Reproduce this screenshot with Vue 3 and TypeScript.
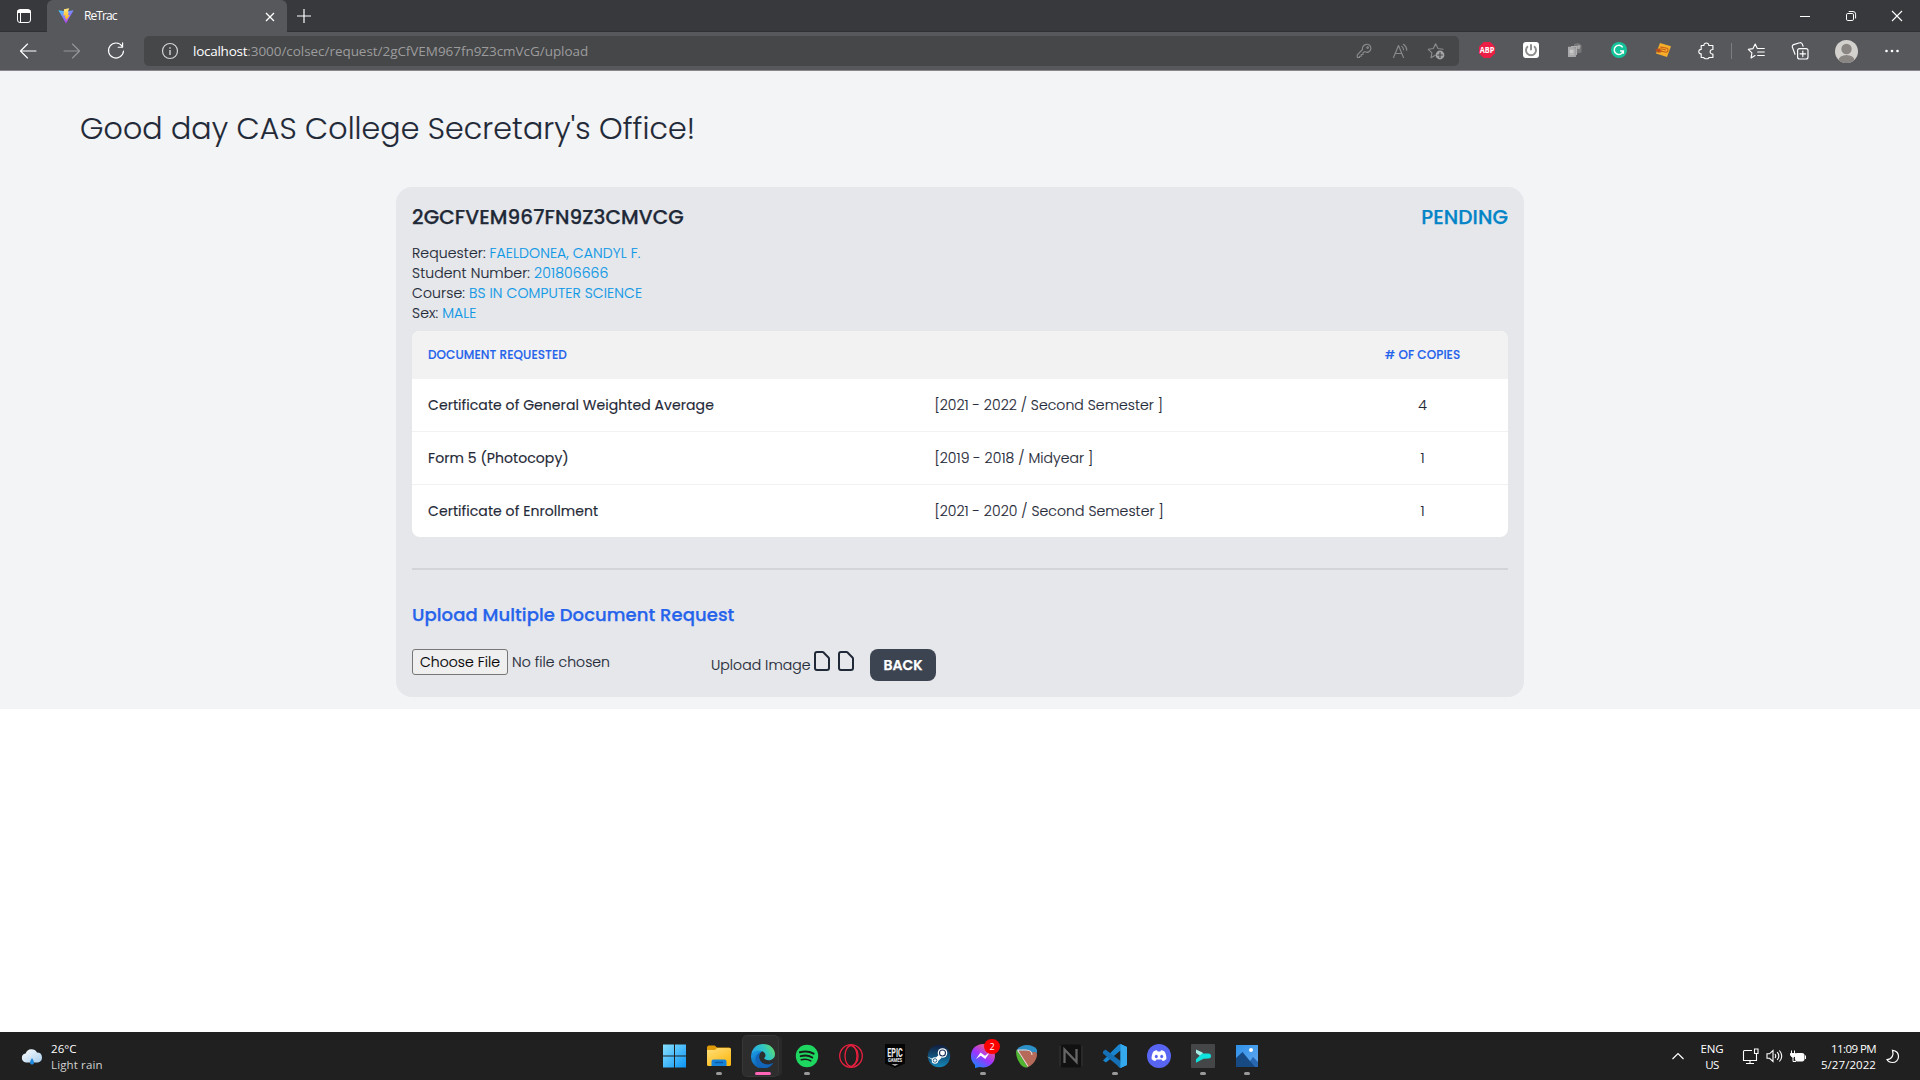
<script setup lang="ts">
import type { Directive } from 'vue'

interface Field { label: string; value: string }
interface DocumentRow { name: string; period: string; copies: number }

const fields: Field[] = [
  { label: 'Requester:', value: 'FAELDONEA, CANDYL F.' },
  { label: 'Student Number:', value: '201806666' },
  { label: 'Course:', value: 'BS IN COMPUTER SCIENCE' },
  { label: 'Sex:', value: 'MALE' },
]

const documents: DocumentRow[] = [
  { name: 'Certificate of General Weighted Average', period: '[2021 - 2022 / Second Semester ]', copies: 4 },
  { name: 'Form 5 (Photocopy)', period: '[2019 - 2018 / Midyear ]', copies: 1 },
  { name: 'Certificate of Enrollment', period: '[2021 - 2020 / Second Semester ]', copies: 1 },
]

// Tracks a single-line label out (or in) so that it spans the given width.
const vFit: Directive<HTMLElement, number> = {
  mounted(el, { value }) {
    const range = document.createRange()
    range.selectNodeContents(el)
    const natural = range.getBoundingClientRect().width
    const count = (el.textContent ?? '').trim().length
    if (count > 1) el.style.letterSpacing = `${((value - natural) / (count - 1)).toFixed(3)}px`
  },
}
</script>

<template>
  <div class="screen">
    <header class="browser">
      <div class="tabstrip">
        <div class="tab-actions">
          <svg width="16" height="16" viewBox="0 0 16 16" fill="none" stroke="#fff"><rect x="1.5" y="1.5" width="13" height="13" rx="2.5" /><path d="M1.5 3.5h13" stroke-width="3" /><path d="M4.5 5v9.5" /></svg>
        </div>
        <div class="tab">
          <svg width="16" height="16" viewBox="0 0 16 16">
            <defs>
              <linearGradient id="vite" x1="0" y1="0" x2=".6" y2="1"><stop offset="0" stop-color="#41d1ff" /><stop offset="1" stop-color="#bd34fe" /></linearGradient>
              <linearGradient id="bolt" x1="0" y1="0" x2="0" y2="1"><stop offset="0" stop-color="#ffea83" /><stop offset="1" stop-color="#ffa800" /></linearGradient>
            </defs>
            <path d="M.4 2.2 8 15.5 15.6 2.2 8 3.6z" fill="url(#vite)" />
            <path d="M11.2.3 6 1.3l-.5 6.1 2 .1-.7 3 1.7-.5-.8 3.4 4-6.5-1.8.2.9-2.8h-1.1z" fill="url(#bolt)" />
          </svg>
          <span v-fit="33.5" class="tab-title">ReTrac</span>
          <svg class="tab-close" width="10" height="10" viewBox="0 0 10 10" stroke="#fff" stroke-width="1.3"><path d="m1 1 8 8M9 1 1 9" /></svg>
        </div>
        <svg class="new-tab" width="16" height="16" viewBox="0 0 16 16" stroke="#fff" stroke-width="1.2"><path d="M8 1v14M1 8h14" /></svg>
        <div class="window-controls">
          <svg width="12" height="12" viewBox="0 0 12 12" stroke="#fff" fill="none"><path d="M1 6.5h10" /></svg>
          <svg width="12" height="12" viewBox="0 0 12 12" stroke="#fff" fill="none"><rect x="1.5" y="3.5" width="7" height="7" rx="1.3" /><path d="M3.7 1.5H8a2.6 2.6 0 0 1 2.6 2.6v4.4" /></svg>
          <svg width="12" height="12" viewBox="0 0 12 12" stroke="#fff" fill="none" stroke-width="1.1"><path d="m1 1 10 10M11 1 1 11" /></svg>
        </div>
      </div>

      <div class="toolbar">
        <span class="tool"><svg width="18" height="18" viewBox="0 0 18 18" class="line"><path d="M17 9H1.600M8.500 2 1.500 9l7 7" /></svg></span>
        <span class="tool dim"><svg width="18" height="18" viewBox="0 0 18 18" class="line"><path d="M1 9h15.400M9.500 2l7 7-7 7" /></svg></span>
        <span class="tool"><svg width="18" height="18" viewBox="0 0 18 18" class="line"><path d="M15.200 4.300A7.500 7.500 0 1 0 16.500 9M15.600.8v4.400h-4.400" /></svg></span>
        <div class="address">
          <svg class="info" width="18" height="18" viewBox="0 0 18 18" fill="none" stroke="#d5d5d6" stroke-width="1.2"><circle cx="9" cy="9" r="7.5" /><path d="M9 8v5M9 5.200v1.500" stroke-width="1.4" /></svg>
          <span class="url"><b v-fit="54.5">localhost</b><span v-fit="341">:3000/colsec/request/2gCfVEM967fn9Z3cmVcG/upload</span></span>
          <span class="address-tool"><svg width="16" height="16" viewBox="0 0 16 16" class="line"><path d="M9.300 1.600a4 4 0 1 1-.6 7L7 9.800v1.700H5.200v1.700H3.500v1.300H1.300v-2.700l5.200-5.300A4.600 4.600 0 0 1 9.300 1.600z" /><circle cx="11.6" cy="4.5" r=".8" /></svg></span>
          <span class="address-tool"><svg width="17" height="16" viewBox="0 0 17 16" class="line"><path d="m1.500 14.500 5-12 5 12M3.200 10.500h6.600M9.800 3.400a4 4 0 0 1 1.700 3.400M11.400 1.300a7.500 7.500 0 0 1 3.400 6" /></svg></span>
          <span class="address-tool"><svg width="18" height="18" viewBox="0 0 18 18" class="line"><path d="M8.300 13.300 4 15.800l.9-4.900L1.300 7.300l5-.8 2.300-4.700L11 6.500l5 .8" /><circle cx="13" cy="13" r="4.4" fill="#a4a4a5" stroke="none" /><path d="M13 10.600v4.800M10.600 13h4.800" stroke="#464749" /></svg></span>
        </div>
        <div class="extensions">
          <span class="tool"><svg width="16" height="16" viewBox="0 0 16 16"><path d="M4.700 0h6.600L16 4.700v6.600L11.300 16H4.700L0 11.300V4.700z" fill="#ed1e45" /><text x="8" y="11" text-anchor="middle" font-size="8.4" font-weight="700" fill="#fff" textLength="14.6" lengthAdjust="spacingAndGlyphs" font-family="Open Sans, sans-serif">ABP</text></svg></span>
          <span class="tool"><svg width="16" height="16" viewBox="0 0 16 16" fill="none"><rect width="16" height="16" rx="3" fill="#fff" /><path d="M4.900 4.300a5 5 0 1 0 6.200 0M8 2.300v6" stroke="#8e8e8e" stroke-width="2" /></svg></span>
          <span class="tool"><svg width="16" height="16" viewBox="0 0 16 16"><path d="M7 2 11 1l3.500 2v7.500L7 12z" fill="#777779" /><path d="M4 4h6v9H4z" fill="#b0b0b1" /><path d="M1.500 5h7.500v10H1.500z" fill="#96969a" /><path d="M1 4.700h5l2.500 2.400v8H1z" fill="#a9a9ab" /><path d="M3 8h3.200v3H3zM3 12.300h4" fill="#c9c9ca" stroke="#c9c9ca" stroke-width=".6" /><path d="m10 4 2-1 1.500 1-1 3h-2z" fill="#a9a9ab" /></svg></span>
          <span class="tool"><svg width="16" height="16" viewBox="0 0 16 16" fill="none"><circle cx="8" cy="8" r="8" fill="#15c39a" /><path d="M11.700 5.400A4.600 4.600 0 1 0 12.300 9H9.100M12.300 9v2.700" stroke="#fff" stroke-width="1.5" /></svg></span>
          <span class="tool"><svg width="18" height="16" viewBox="0 0 18 16" fill="none"><path d="m6 1 11 3.300-4 10.700-11-3.400z" fill="#f4ae2a" /><path d="m1 7.500 4.500-1.200L8 10l-4 .7z" fill="#b84f1c" /><path d="m7 5 6 1.300c2 .8 1 3.800-1 4L7 9zm1 2 4 1" stroke="#c85f19" stroke-width="1.1" /></svg></span>
          <span class="tool"><svg width="18" height="18" viewBox="0 0 18 18" class="line"><path d="M3.200 3.500h2.700C5.700.2 11 .2 10.800 3.500h4.100v4c-3.700-.2-3.700 4.800 0 4.600v3.400h-4c.2 1.700-5.100 1.700-5 0H3.200v-3.700C0 12.300 0 7 3.200 7.400z" /></svg></span>
        </div>
        <i class="separator"></i>
        <span class="tool"><svg width="18" height="18" viewBox="0 0 18 18" class="line"><path d="m8 13.600-3.900 2.300.8-5L1.300 7.400l4.700-.8L8.200 2l2 4.200M10.700 6.500h6.600M10.700 10h6.600M10.700 13.500h6.600" /></svg></span>
        <span class="tool"><svg width="18" height="18" viewBox="0 0 18 18" class="line"><rect x="6.6" y="6.6" width="10.4" height="10.4" rx="2" /><path d="M11.800 9v5.600M9 11.800h5.600M4 12.300 1.400 5.200a2 2 0 0 1 1.200-2.600L8.700.8a2 2 0 0 1 2.600 1.300l.8 2.100" /></svg></span>
        <span class="tool avatar"><svg width="23" height="23" viewBox="0 0 23 23"><clipPath id="face"><circle cx="11.5" cy="11.5" r="11.5" /></clipPath><g clip-path="url(#face)"><rect width="23" height="23" fill="#d3d1ce" /><circle cx="11.5" cy="9" r="5.2" fill="#8a8683" /><ellipse cx="11.5" cy="20.5" rx="8" ry="5.5" fill="#8a8683" /></g></svg></span>
        <span class="tool"><svg width="16" height="4" viewBox="0 0 16 4" fill="#fff"><circle cx="2.5" cy="2" r="1.3" /><circle cx="8" cy="2" r="1.3" /><circle cx="13.5" cy="2" r="1.3" /></svg></span>
      </div>
    </header>

    <main class="page">
      <h1>Good day CAS College Secretary's Office!</h1>
      <section class="card">
        <div class="card-head">
          <h2>2GCFVEM967FN9Z3CMVCG</h2>
          <strong>PENDING</strong>
        </div>
        <ul class="fields">
          <li v-for="f in fields" :key="f.label">{{ f.label }} <em>{{ f.value }}</em></li>
        </ul>
        <div class="table">
          <div class="row head">
            <span class="name">DOCUMENT REQUESTED</span>
            <span class="copies"># OF COPIES</span>
          </div>
          <div v-for="d in documents" :key="d.name" class="row">
            <span class="name">{{ d.name }}</span>
            <span class="period">{{ d.period }}</span>
            <span class="copies">{{ d.copies }}</span>
          </div>
        </div>
        <hr />
        <h3>Upload Multiple Document Request</h3>
        <div class="upload">
          <button class="choose" type="button">Choose File</button>
          <span class="chosen">No file chosen</span>
          <span class="upload-label">Upload Image</span>
          <svg v-for="n in 2" :key="n" width="24" height="24" viewBox="0 0 24 24" fill="none" stroke="#1f2937" stroke-width="2"><path d="M7 21h10a2 2 0 0 0 2-2V9.400a1 1 0 0 0-.3-.7l-5.400-5.400a1 1 0 0 0-.7-.3H7a2 2 0 0 0-2 2v14a2 2 0 0 0 2 2z" /></svg>
          <button class="back" type="button">BACK</button>
        </div>
      </section>
    </main>

    <footer class="taskbar">
      <div class="weather">
        <svg width="22" height="17" viewBox="0 0 22 17"><defs><linearGradient id="cloud" x1="0" y1="0" x2="1" y2="1"><stop offset="0" stop-color="#fff" /><stop offset="1" stop-color="#a7cdec" /></linearGradient></defs><path d="M5 14.500A4.600 4.600 0 0 1 4.600 5.400 6.300 6.300 0 0 1 16 4.600a5 5 0 0 1 1 9.900z" fill="url(#cloud)" /><path d="M11 10c3 4 2.300 6.500 0 6.500S8 14 11 10z" fill="#2088dd" /></svg>
        <div class="stack left"><span v-fit="25.5">26°C</span><span v-fit="51.5" class="muted">Light rain</span></div>
      </div>
      <nav class="apps">
        <span class="app"><svg width="24" height="24" viewBox="0 0 24 24"><defs><linearGradient id="win" x1="0" y1="0" x2="1" y2="1"><stop offset="0" stop-color="#87e0ff" /><stop offset="1" stop-color="#0a94f5" /></linearGradient></defs><path d="M0 .5h11v11H0zM12 .5h11v11H12zM0 12.500h11v11H0zM12 12.500h11v11H12z" fill="url(#win)" /></svg></span>
        <span class="app open"><svg width="24" height="24" viewBox="0 0 24 24"><defs><linearGradient id="folder" x1="0" y1="0" x2=".7" y2="1"><stop offset="0" stop-color="#ffe07c" /><stop offset="1" stop-color="#fdb813" /></linearGradient></defs><path d="M0 3.200A2 2 0 0 1 2 1.400h5.600l2.500 2H22a2 2 0 0 1 2 2v4H0z" fill="#e09b08" /><path d="M0 6h8l2-2h12.500A1.500 1.500 0 0 1 24 5.500v15a1.500 1.500 0 0 1-1.500 1.500h-21A1.500 1.500 0 0 1 0 20.500z" fill="url(#folder)" /><path d="M4.500 22v-4.500a2 2 0 0 1 2-2h11a2 2 0 0 1 2 2V22z" fill="#1683d9" /><path d="M8.500 18.500h7" stroke="#0b5ba8" stroke-width="1.5" stroke-linecap="round" /></svg></span>
        <span class="app open active">
          <svg width="24" height="24" viewBox="0 0 24 24"><defs><linearGradient id="edge1" x1="0" y1=".4" x2="1" y2="0"><stop offset="0" stop-color="#2aa7e8" /><stop offset=".5" stop-color="#2fc6c2" /><stop offset="1" stop-color="#70e455" /></linearGradient><linearGradient id="edge2" x1="0" y1="0" x2=".6" y2="1"><stop offset="0" stop-color="#1ba0e8" /><stop offset="1" stop-color="#0b53a5" /></linearGradient></defs><path d="M.4 10C1.300 4 6 0 12 0c7.500 0 12 5 12 10.200 0 3.600-2.800 6-6.200 6-2.600 0-4.600-.9-4.600-1.900 0-.7 1.300-1 1.300-3.100C14.500 8 10 4 .4 10z" fill="url(#edge1)" /><path d="M.2 10.500C2.500 6 8 5.500 11.500 7.500c-3 1-4 3.500-3.600 6 .6 4.200 4.500 7.500 9 7 2-.2 3.600-1 4.600-1.500.5-.3.8.1.5.5A12 12 0 0 1 0 12.500z" fill="url(#edge2)" /><path d="M9 8.500c-2.500 1-5 4-4.500 7.500.6 4 4 7.400 8.500 7.900 3 .2 7-1.400 9-4.300-5 2.500-14 .5-13.800-6.500.1-2 .8-3.500.8-4.600z" fill="#1265b8" /></svg>
        </span>
        <span class="app open"><svg width="24" height="24" viewBox="0 0 24 24" fill="none" stroke="#191b19" stroke-linecap="round"><circle cx="12" cy="12" r="11.2" fill="#1ed760" stroke="none" /><path d="M5 8.300c4.500-1.300 9.500-.9 13.600 1.300" stroke-width="2.2" /><path d="M5.700 12.200c4-1.100 8.200-.7 11.600 1.300" stroke-width="1.9" /><path d="M6.300 15.800c3.300-.9 6.700-.5 9.500 1.100" stroke-width="1.6" /></svg></span>
        <span class="app"><svg width="24" height="24" viewBox="0 0 24 24" fill="none" stroke="#e8203f" stroke-width="1.3"><circle cx="12" cy="12" r="11.3" /><ellipse cx="12" cy="12" rx="6" ry="10.5" /><path d="M13.500 2.500c4 1.500 5.500 5.500 5.500 9.500s-1.500 8-5.500 9.500" /></svg></span>
        <span class="app"><svg class="epic" width="24" height="24" viewBox="0 0 24 24"><path d="M2 0h20v19.500L12 24 2 19.500z" fill="#050505" /><g fill="#eee" font-family="Roboto, sans-serif" font-weight="700" text-anchor="middle"><text x="12" y="12.500" font-size="12.5" textLength="15.5" lengthAdjust="spacingAndGlyphs">EPIC</text><text x="12" y="17.500" font-size="4.5" textLength="14" lengthAdjust="spacingAndGlyphs">GAMES</text></g><path d="M8.500 20.200 12 21.800l3.500-1.600z" fill="#ddd" /></svg></span>
        <span class="app"><svg width="24" height="24" viewBox="0 0 24 24"><defs><linearGradient id="steam" x1="0" y1="0" x2="0" y2="1"><stop offset="0" stop-color="#111d3d" /><stop offset="1" stop-color="#1387b8" /></linearGradient></defs><circle cx="12" cy="12" r="11.2" fill="url(#steam)" /><path d="m0 12.500 7 3 4.500-4.500 3 3-5 4.500" fill="#fff" /><circle cx="8" cy="16.500" r="3.200" fill="#fff" /><circle cx="15.500" cy="9" r="4.800" fill="#fff" /><circle cx="15.500" cy="9" r="3" fill="none" stroke="#1b315a" stroke-width="1.1" /><circle cx="8" cy="16.500" r="1.800" fill="none" stroke="#1b5a86" stroke-width=".9" /></svg></span>
        <span class="app open"><svg width="24" height="24" viewBox="0 0 24 24"><defs><linearGradient id="msg" x1=".1" y1="1" x2=".8" y2="0"><stop offset="0" stop-color="#0a8cff" /><stop offset=".5" stop-color="#a033ff" /><stop offset="1" stop-color="#ff6a68" /></linearGradient></defs><path d="M12 0c6.800 0 12 5 12 11.700s-5.200 11.700-12 11.700c-1.200 0-2.400-.2-3.500-.5L4 24v-3A11.500 11.500 0 0 1 0 11.700C0 5 5.200 0 12 0z" fill="url(#msg)" /><path d="m5 15 4.500-6.500 4.500 3.200 5-3.700-4.700 7-4.500-3.300z" fill="#fff" /></svg><b class="badge">2</b></span>
        <span class="app"><svg width="24" height="24" viewBox="0 0 24 24" fill="none"><path d="M2 5.500C6-.5 18-.5 22 5.500V9H2z" fill="#2c91c9" /><path d="M1.500 5.500 13 23.500c-5 .5-7-2-9.500-6.500C1.500 13.500.5 9 1.500 5.500z" fill="#50b531" /><path d="M3 6.500h9c2 0 4 .5 5.500 2 2-1 4.500-.5 4.500 2 0 4-3 10-9 12.500z" fill="#b66a5a" /><path d="M2.500 6h8.500c3.500 0 6 2 6 5M2.800 6.500 13 22.500" stroke="#f0ddd7" stroke-width="1.1" /></svg></span>
        <span class="app"><svg width="24" height="24" viewBox="0 0 24 24" fill="none"><path d="M0 2h24v20H0z" fill="#292929" /><rect x="2" y=".5" width="20" height="23" rx="1.5" fill="#111" /><path d="M5.500 19V5.500L17.500 18V5" stroke="#666" stroke-width="2.3" /></svg></span>
        <span class="app open"><svg width="24" height="24" viewBox="0 0 24 24"><path d="M17.500 0 24 3v18l-6.500 3-2.500-1.500L17.500 18V6.500L3 18.500 0 16.500 15.500.8z" fill="#1a85cf" /><path d="m0 7.500 2.500-2L17.500 17v7L0 9.500z" fill="#1670b5" /><path d="m17.500 0 6.500 3v18l-6.500 3z" fill="#35a9ed" /></svg></span>
        <span class="app"><svg width="24" height="24" viewBox="0 0 24 24"><circle cx="12" cy="12" r="12" fill="#5865f2" /><path d="M8.300 6.500 10 6.300l.6 1.200h2.800l.6-1.200 1.700.2 1.800 1c1.300 2 2 4.500 1.900 7.500-1 1.200-2.500 1.900-3.800 2.100l-1-1.500H9.400l-1 1.500c-1.400-.2-2.800-.9-3.800-2.100-.1-3 .6-5.500 1.900-7.500z" fill="#fff" /><ellipse cx="9.3" cy="12.5" rx="1.5" ry="1.7" fill="#5865f2" /><ellipse cx="14.7" cy="12.5" rx="1.5" ry="1.7" fill="#5865f2" /></svg></span>
        <span class="app open"><svg width="24" height="24" viewBox="0 0 24 24"><rect width="24" height="24" rx="1" fill="#444647" /><path d="m5 5.500 6.500 3 1.500 3.500-2.500 1L5 9z" fill="#a4eee6" /><path d="M11 9.500h6.500a2.500 2.500 0 0 1 0 5l-5 .3-7.500 4v-3.500z" fill="#10e2dd" /></svg></span>
        <span class="app open"><svg width="24" height="24" viewBox="0 0 24 24"><defs><linearGradient id="photo" x1="0" y1="0" x2="1" y2="1"><stop offset="0" stop-color="#2e91e9" /><stop offset="1" stop-color="#65a9ef" /></linearGradient></defs><path d="M1 1h22v22H1z" fill="url(#photo)" /><path d="M11 23 18 13l5 5v5z" fill="#2868b0" /><path d="M1 14 7.500 8 20 23H1z" fill="#174a83" /><circle cx="16" cy="6" r="2" fill="#fff" /></svg></span>
      </nav>
      <div class="tray">
        <svg class="chevron" width="14" height="8" viewBox="0 0 14 8" fill="none" stroke="#fff" stroke-width="1.2"><path d="m1.500 7 5.500-5.500L12.500 7" /></svg>
        <div class="stack lang"><span v-fit="23">ENG</span><span v-fit="14">US</span></div>
        <svg class="net" width="17" height="17" viewBox="0 0 17 17" fill="none" stroke="#fff" stroke-width="1.1"><path d="M10 2.500H2.500a1 1 0 0 0-1 1v9h13V8M4 15.500h8M8 12.500v3M14.500 6v4M12.500 1h3.500v4.500h-3.500z" /></svg>
        <svg class="sound" width="17" height="14" viewBox="0 0 17 14" fill="none" stroke="#fff" stroke-width="1.1"><path d="M1 4.800h2.500L7 1.500v11L3.500 9.300H1zM9 5c.9 1.200.9 2.800 0 4M11.200 3.200c2 2.300 2 5.300 0 7.600M13.400 1.500c3 3.500 3 7.500 0 11" /></svg>
        <svg class="battery" width="17" height="13" viewBox="0 0 17 13" fill="none" stroke="#fff"><rect x="5.5" y="3.5" width="8.5" height="7.5" rx="1.5" fill="#fff" /><path d="M15.500 5.500v3.500M1.500.5v3M4.500.5v3" /><path d="M.5 3.500h5v1.500l-1.500 2h-2l-1.500-2z" fill="#fff" /><path d="M3 7v4.500h3" /></svg>
        <div class="stack right"><span v-fit="45.5">11:09 PM</span><span v-fit="55">5/27/2022</span></div>
        <svg class="moon" width="14" height="15" viewBox="0 0 14 15" fill="none" stroke="#fff" stroke-width="1.2"><path d="M6.500 1.300c4 .5 6 3.200 6 6.200 0 3.500-2.700 6-6 6-2.300 0-4.500-1-5.500-3 5-.2 7-4.500 5.500-9.200z" /></svg>
      </div>
    </footer>
  </div>
</template>

<style>
html, body { margin: 0; background: #fff; overflow: hidden; }
</style>

<style scoped>
* { box-sizing: border-box; }
.screen { width: 1920px; height: 1080px; display: flex; flex-direction: column; font-family: Poppins, Inter, sans-serif; color: #1f2937; background: #fff; white-space: nowrap; }
svg { display: block; flex: none; }
h1, h2, h3, ul { margin: 0; padding: 0; font-weight: inherit; list-style: none; }

.browser { height: 71px; background: #57585c; border-bottom: 1px solid #89868b; color: #fff; font-family: "Open Sans", "Noto Sans", sans-serif; flex: none; }
.tabstrip { height: 32px; display: flex; background: #38393c; align-items: center; box-shadow: inset 0 -1px #303134; }
.tab-actions { width: 47px; display: flex; padding-left: 16px; }
.tab { width: 240px; height: 32px; background: #57585c; border-radius: 6px 6px 0 0; display: flex; align-items: center; padding: 0 12px 0 11px; }
.tab-title { font-size: 12px; margin-left: 10px; line-height: 16px; }
.tab-close { margin: 2px 0 0 auto; }
.new-tab { margin-left: 9px; }
.window-controls { margin-left: auto; display: flex; gap: 34px; padding-right: 17px; }
.toolbar { height: 38px; display: flex; align-items: center; padding-left: 6px; }
.line { fill: none; stroke: currentColor; stroke-width: 1.15; stroke-linejoin: round; stroke-linecap: round; }
.tool { width: 44px; display: flex; justify-content: center; flex: none; }
.tool.dim { color: #949598; }
.tool.avatar { width: 48px; }
.address { width: 1315px; height: 30px; margin: 0 6px; background: #464749; border-radius: 5px; display: flex; align-items: center; padding-right: 5px; color: #9c9c9d; flex: none; }
.address-tool { width: 36px; display: flex; justify-content: center; color: #8a8a8c; }
.info { margin-left: 17px; }
.url { margin-left: 14px; flex: 1; font-size: 13.5px; line-height: 20px; }
.url b { color: #fff; font-weight: 400; }
.extensions { display: flex; }
.separator { width: 1px; height: 16px; background: #7c7d80; margin: 0 2px; }

.page { height: 638px; background: #f3f4f6; padding-top: 40px; flex: none; -webkit-text-stroke: .15px currentColor; }
h1 { font-size: 30px; line-height: 36px; font-weight: 300; padding-left: 80px; letter-spacing: .11px; }
.card { width: 1128px; height: 510px; margin: 40px auto 0; border-radius: 16px; background: #e5e7eb; padding: 16px; display: flex; flex-direction: column; font-size: 14px; font-weight: 300; }
.card-head { display: flex; justify-content: space-between; height: 28px; line-height: 28px; font-size: 20px; letter-spacing: .1px; -webkit-text-stroke-width: .25px; }
.card-head h2 { font-size: 20px; font-weight: 500; }
.card-head strong { font-weight: 500; color: #0284c7; }
.fields { margin-top: 12px; line-height: 20px; letter-spacing: .12px; }
.fields li { height: 20px; }
.fields em { font-style: normal; color: #0c97e6; }
.table { margin-top: 8px; height: 206px; border-radius: 8px; overflow: hidden; background: #fff; letter-spacing: .07px; }
.row { height: 53px; border-bottom: 1px solid #f2f2f2; display: flex; align-items: center; line-height: 20px; }
.row:last-child { height: 52px; border-bottom: 0; }
.row.head { height: 48px; background: #f2f2f2; color: #2563eb; font-size: 12px; line-height: 16px; font-weight: 500; border: 0; }
.name { width: 522.5px; padding-left: 16px; font-weight: 400; }
.head .name { width: 957px; font-weight: 500; }
.period { width: 434.5px; }
.copies { width: 107px; text-align: center; }
hr { width: 100%; height: 2px; border: 0; margin: 31px 0; background: #d2d4d8; flex: none; }
h3 { font-size: 18px; line-height: 28px; font-weight: 500; color: #2563eb; letter-spacing: .08px; -webkit-text-stroke-width: .25px; }
.upload { display: flex; align-items: flex-start; margin-top: 20px; height: 32px; letter-spacing: .07px; }
.choose { height: 26px; width: 96px; border: 1px solid #767676; border-radius: 3px; background: #efefef; color: #000; font: inherit; line-height: 24px; letter-spacing: .07px; padding: 0; white-space: nowrap; }
.chosen { width: 199px; margin-left: 4px; line-height: 26px; }
.upload-label { width: 99px; line-height: 32px; }
.back { margin-left: 12px; width: 66px; height: 32px; border: 0; border-radius: 8px; background: #3d4451; color: #fff; font: 600 14px/32px Poppins, Inter, sans-serif; -webkit-text-stroke: .25px #fff; padding: 0; }

.taskbar { margin-top: auto; height: 48px; background: #202020; color: #fff; display: flex; align-items: center; font-family: "Open Sans", "Noto Sans", sans-serif; font-size: 11.5px; }
.weather { width: 653px; display: flex; align-items: center; padding-left: 21px; gap: 8px; }
.stack { display: flex; flex-direction: column; line-height: 16px; padding-top: 2px; }
.left { align-items: flex-start; }
.muted { color: #d0d0d0; }
.apps { display: flex; width: 616px; }
.app { width: 44px; height: 48px; display: flex; align-items: center; justify-content: center; position: relative; }
.app.open::after { content: ""; position: absolute; bottom: 5px; left: 19px; width: 6px; height: 3px; border-radius: 2px; background: #9a9a9a; }
.app.active::before { content: ""; position: absolute; left: 2px; top: 4px; width: 35px; height: 40px; border-radius: 4px; background: #2d2d2d; box-shadow: 0 0 0 1px #363636, 4px 0 0 #292929; }
.app.active svg { position: relative; }
.app.active::after { width: 16px; left: 14px; background: #ff66b8; }
.epic { overflow: visible; }
.badge { position: absolute; left: 23px; top: 7px; width: 16px; height: 15px; border-radius: 8px; background: #f00; font-size: 9px; font-weight: 400; line-height: 15px; text-align: center; }
.tray { flex: 1; display: flex; align-items: center; padding-left: 402px; }
.lang { width: 24px; margin-left: 15px; align-items: center; }
.net { margin-left: 17.5px; }
.sound { margin-left: 7px; }
.battery { margin-left: 7px; }
.right { width: 56px; margin-left: 13.5px; align-items: flex-end; }
.moon { margin-left: 10px; }
</style>
